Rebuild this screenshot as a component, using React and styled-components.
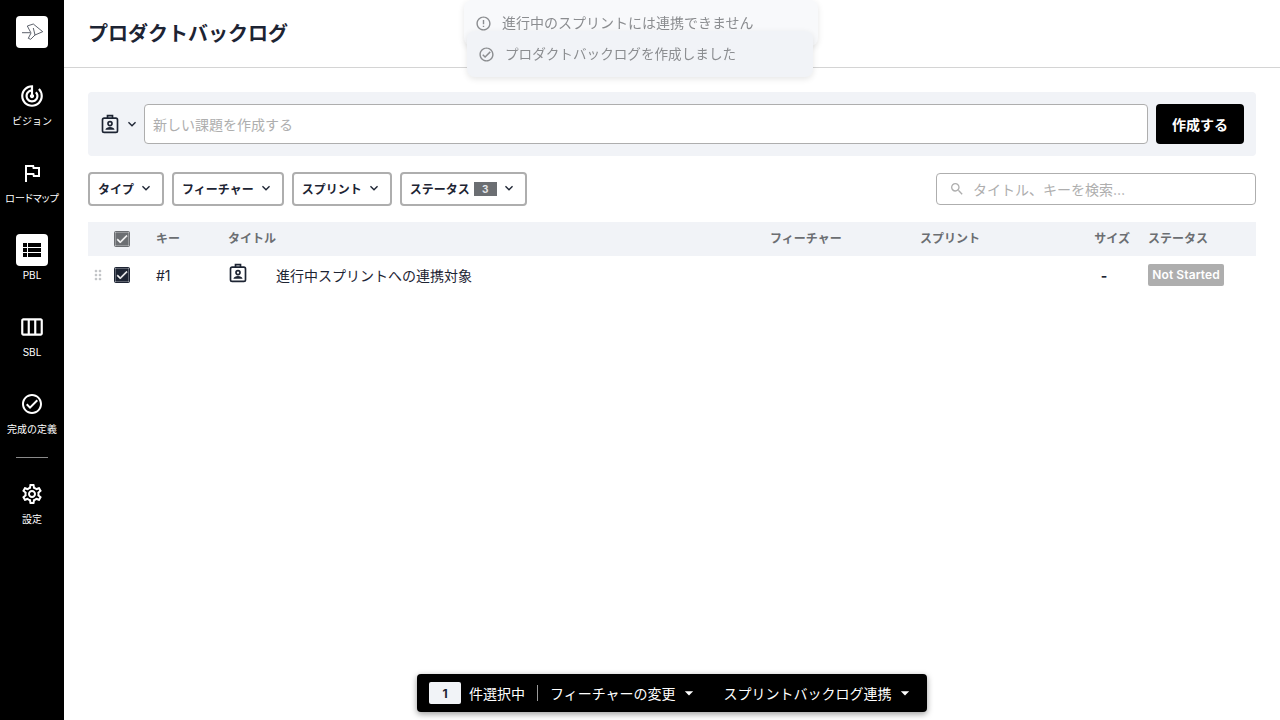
import React from "react";
import styled, { createGlobalStyle } from "styled-components";
import {
  MdOutlineFlag,
  MdOutlineSettings,
  MdOutlineCheckCircle,
  MdOutlineErrorOutline,
  MdDragIndicator,
  MdCheck,
  MdSearch,
  MdKeyboardArrowDown,
  MdArrowDropDown,
  MdViewList,
  MdOutlineViewWeek,
  MdOutlineTrackChanges,
} from "react-icons/md";

const FONT = `Inter, "Noto Sans CJK JP", sans-serif`;

const GlobalStyle = createGlobalStyle`
  html, body { margin: 0; padding: 0; height: 100%; }
  body { font-family: ${FONT}; color: #1d2433; background: #fff; overflow: hidden; }
  #root { height: 100%; }
  * { box-sizing: border-box; }
`;

const Page = styled.div`
  display: flex;
  height: 720px;
  position: relative;
`;

const Sidebar = styled.nav`
  width: 64px;
  flex-shrink: 0;
  background: #000;
  display: flex;
  flex-direction: column;
  align-items: center;
  padding-top: 16px;
`;

const LogoBox = styled.div`
  width: 32px;
  height: 32px;
  background: #fff;
  border-radius: 4px;
  display: flex;
  align-items: center;
  justify-content: center;
  margin-bottom: 16px;
`;

const NavItem = styled.div`
  width: 64px;
  height: ${(p) => p.$h || 77}px;
  display: flex;
  flex-direction: column;
  align-items: center;
  color: #fff;
  padding-top: 16px;
`;

const NavIcon = styled.div`
  width: 32px;
  height: 32px;
  border-radius: 4px;
  display: flex;
  align-items: center;
  justify-content: center;
  background: ${(p) => (p.$active ? "#fff" : "transparent")};
  color: ${(p) => (p.$active ? "#000" : "#fff")};
`;

const NavLabel = styled.span`
  font-size: 10px;
  line-height: 14px;
  margin-top: 1.5px;
  white-space: nowrap;
  font-feature-settings: ${(p) => (p.$tight ? '"palt"' : "normal")};
`;

const Divider = styled.div`
  width: 32px;
  height: 1px;
  background: #8a8a8a;
  margin: 4px 0;
`;

const Main = styled.main`
  flex: 1;
  min-width: 0;
  display: flex;
  flex-direction: column;
`;

const Header = styled.header`
  height: 68px;
  border-bottom: 1px solid #d4d4d4;
  padding: 0 24px 2px;
  display: flex;
  align-items: center;
`;

const Title = styled.h1`
  margin: 0;
  font-size: 20px;
  font-weight: 700;
  color: #1d2433;
`;

const Content = styled.div`
  padding: 24px;
  display: flex;
  flex-direction: column;
`;

const CreateBar = styled.div`
  height: 64px;
  background: #f1f3f7;
  border-radius: 4px;
  display: flex;
  align-items: center;
  padding: 0 12px;
`;

const TypeSelect = styled.div`
  display: flex;
  align-items: center;
  gap: 4px;
  width: 44px;
  color: #1d2433;
`;

const CreateInput = styled.div`
  flex: 1;
  height: 40px;
  background: #fff;
  border: 1px solid #aeaeae;
  border-radius: 4px;
  display: flex;
  align-items: center;
  padding: 0 8px;
  font-size: 14px;
  color: #aeaeae;
`;

const CreateButton = styled.button`
  width: 88px;
  height: 40px;
  margin-left: 8px;
  background: #000;
  color: #fff;
  border: none;
  border-radius: 4px;
  font-family: ${FONT};
  font-size: 14px;
  font-weight: 700;
`;

const FilterRow = styled.div`
  display: flex;
  align-items: center;
  gap: 8px;
  margin-top: 16px;
  height: 34px;
`;

const FilterButton = styled.div`
  height: 34px;
  border: 2px solid #aeaeae;
  border-radius: 4px;
  background: #fff;
  display: flex;
  align-items: center;
  padding: 0 8px 2px;
  gap: 4px;
  font-size: 12px;
  font-weight: 700;
  color: #1d2433;
`;

const CountBadge = styled.span`
  width: 23px;
  height: 14px;
  margin-top: 2px;
  background: #6b6e72;
  color: #e4e5e7;
  font-size: 10px;
  font-weight: 700;
  display: flex;
  align-items: center;
  justify-content: center;
`;

const SearchBox = styled.div`
  width: 320px;
  height: 32px;
  margin-left: auto;
  border: 1px solid #aeaeae;
  border-radius: 4px;
  display: flex;
  align-items: center;
  padding: 0 12px;
  gap: 8px;
  font-size: 14px;
  color: #aeaeae;
`;

const Columns = `26px 42px 72px 48px 494px 150px 150px 78px 104px`;

const TableHead = styled.div`
  display: grid;
  grid-template-columns: ${Columns};
  align-items: center;
  height: 34px;
  margin-top: 16px;
  background: #f1f3f7;
  font-size: 12px;
  font-weight: 700;
  color: #6b6e72;
`;

const HeadCell = styled.span`
  padding-bottom: 3px;
  text-align: ${(p) => p.$align || "left"};
  padding-right: ${(p) => p.$pr || 0}px;
`;

const TableRow = styled.div`
  display: grid;
  grid-template-columns: ${Columns};
  align-items: center;
  height: 38px;
  font-size: 14px;
  color: #1d2433;
`;

const Check = styled.span`
  width: 16px;
  height: 16px;
  border-radius: 2px;
  display: flex;
  align-items: center;
  justify-content: center;
  color: #fff;
  background: ${(p) => (p.$muted ? "#6b6e72" : "#1d2433")};
`;

const CheckMark = styled(MdCheck)`
  width: 14px;
  height: 14px;
  stroke: currentColor;
  stroke-width: 1;
`;

const Grip = styled.span`
  display: flex;
  justify-content: center;
  padding-right: 6px;
  color: #c2c4c7;
`;

const SizeCell = styled.span`
  text-align: center;
  font-weight: 700;
  padding-right: 10px;
`;

const RowIcon = styled.span`
  display: flex;
  padding-bottom: 4px;
`;

const StatusTag = styled.span`
  display: inline-flex;
  align-items: center;
  height: 22px;
  width: 76px;
  padding-bottom: 2px;
  justify-content: center;
  background: #aeaeae;
  color: #fff;
  font-size: 12px;
  font-weight: 600;
  letter-spacing: 0.1px;
  border-radius: 2px;
`;

const Toast = styled.div`
  position: absolute;
  display: flex;
  align-items: center;
  border-radius: 8px;
  font-size: ${(p) => p.$font}px;
  color: #8b8d90;
  gap: 10px;
  padding: 0 0 2px 11px;
  left: ${(p) => p.$left}px;
  top: ${(p) => p.$top}px;
  width: ${(p) => p.$width}px;
  height: ${(p) => p.$height}px;
  background: ${(p) => p.$bg};
  filter: blur(0.7px);
  box-shadow: 0 2px 6px rgba(0, 0, 0, 0.1);

  svg {
    margin-top: 3px;
  }
`;

const ActionBar = styled.div`
  position: absolute;
  left: 417px;
  top: 674px;
  width: 510px;
  height: 38px;
  background: #000;
  border-radius: 4px;
  box-shadow: 0 2px 6px rgba(0, 0, 0, 0.4);
  display: flex;
  align-items: center;
  padding-left: 12px;
  color: #fff;
  font-size: 14px;
`;

const SelectedCount = styled.span`
  width: 32px;
  height: 22px;
  background: #f1f3f7;
  color: #1d2433;
  border-radius: 2px;
  font-size: 12px;
  font-weight: 700;
  display: flex;
  align-items: center;
  justify-content: center;
  margin-right: 8px;
`;

const BarSeparator = styled.span`
  width: 1px;
  height: 16px;
  background: #9a9a9a;
  margin: 0 12px;
`;

const BarAction = styled.span`
  display: flex;
  align-items: center;
  gap: 3px;
  margin-right: ${(p) => p.$gap || 0}px;
`;

const Logo = () => (
  <svg width="24" height="24" viewBox="0 0 24 24" fill="none" stroke="#333a46" strokeWidth="0.8">
    <path d="M2 12.7h8" />
    <path d="M7.300 6l6-2 9.400 7.700-7.700 3.300-4.300 4.300-2.400-1 2.700-5.300z" />
    <path d="M13.300 8l1.700 7" />
  </svg>
);

const BadgeIcon = () => (
  <svg width="20" height="20" viewBox="0 0 24 24" fill="none" stroke="currentColor" strokeWidth="2">
    <rect x="3" y="5" width="18" height="17" rx="2" />
    <path d="M9 5V2h6v3" />
    <circle cx="12" cy="11.500" r="2.400" />
    <path d="M6.500 19c.6-2.400 2.800-3.400 5.500-3.400s4.900 1 5.500 3.400z" fill="currentColor" stroke="none" />
  </svg>
);

export default function App() {
  return (
    <Page>
      <GlobalStyle />
      <Sidebar>
        <LogoBox>
          <Logo />
        </LogoBox>
        <NavItem>
          <NavIcon><MdOutlineTrackChanges size={26} /></NavIcon>
          <NavLabel>ビジョン</NavLabel>
        </NavItem>
        <NavItem>
          <NavIcon><MdOutlineFlag size={24} /></NavIcon>
          <NavLabel $tight>ロードマップ</NavLabel>
        </NavItem>
        <NavItem>
          <NavIcon $active><MdViewList size={24} /></NavIcon>
          <NavLabel>PBL</NavLabel>
        </NavItem>
        <NavItem>
          <NavIcon><MdOutlineViewWeek size={26} /></NavIcon>
          <NavLabel>SBL</NavLabel>
        </NavItem>
        <NavItem $h={81}>
          <NavIcon><MdOutlineCheckCircle size={24} /></NavIcon>
          <NavLabel>完成の定義</NavLabel>
        </NavItem>
        <Divider />
        <NavItem>
          <NavIcon><MdOutlineSettings size={24} /></NavIcon>
          <NavLabel>設定</NavLabel>
        </NavItem>
      </Sidebar>
      <Main>
        <Header>
          <Title>プロダクトバックログ</Title>
        </Header>
        <Content>
          <CreateBar>
            <TypeSelect>
              <BadgeIcon />
              <MdKeyboardArrowDown size={16} />
            </TypeSelect>
            <CreateInput>新しい課題を作成する</CreateInput>
            <CreateButton>作成する</CreateButton>
          </CreateBar>
          <FilterRow>
            <FilterButton>タイプ<MdKeyboardArrowDown size={16} /></FilterButton>
            <FilterButton>フィーチャー<MdKeyboardArrowDown size={16} /></FilterButton>
            <FilterButton>スプリント<MdKeyboardArrowDown size={16} /></FilterButton>
            <FilterButton>ステータス<CountBadge>3</CountBadge><MdKeyboardArrowDown size={16} /></FilterButton>
            <SearchBox><MdSearch size={16} />タイトル、キーを検索…</SearchBox>
          </FilterRow>
          <TableHead>
            <span />
            <Check $muted><CheckMark /></Check>
            <HeadCell>キー</HeadCell>
            <HeadCell>タイトル</HeadCell>
            <span />
            <HeadCell>フィーチャー</HeadCell>
            <HeadCell>スプリント</HeadCell>
            <HeadCell $align="right" $pr={18}>サイズ</HeadCell>
            <HeadCell>ステータス</HeadCell>
          </TableHead>
          <TableRow>
            <Grip><MdDragIndicator size={16} /></Grip>
            <Check><CheckMark /></Check>
            <span>#1</span>
            <RowIcon><BadgeIcon /></RowIcon>
            <span>進行中スプリントへの連携対象</span>
            <span />
            <span />
            <SizeCell>-</SizeCell>
            <span><StatusTag>Not Started</StatusTag></span>
          </TableRow>
        </Content>
      </Main>
      <Toast $left={464} $top={0} $width={354} $height={46} $bg="#f8f9fb" $font={14}>
        <MdOutlineErrorOutline size={17} />進行中のスプリントには連携できません
      </Toast>
      <Toast $left={467} $top={31} $width={346} $height={46} $bg="#f1f3f7" $font={13.6}>
        <MdOutlineCheckCircle size={17} />プロダクトバックログを作成しました
      </Toast>
      <ActionBar>
        <SelectedCount>1</SelectedCount>
        件選択中
        <BarSeparator />
        <BarAction $gap={25}>フィーチャーの変更<MdArrowDropDown size={20} /></BarAction>
        <BarAction>スプリントバックログ連携<MdArrowDropDown size={20} /></BarAction>
      </ActionBar>
    </Page>
  );
}
